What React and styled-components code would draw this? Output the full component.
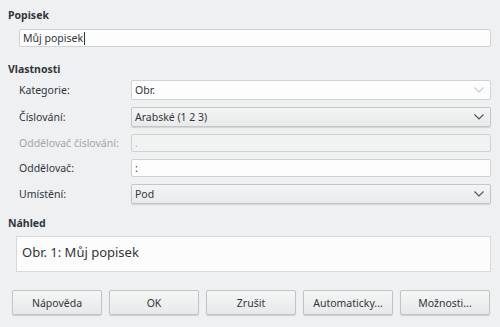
import React from 'react';
import styled, { createGlobalStyle } from 'styled-components';

const Global = createGlobalStyle`
  html, body {
    margin: 0;
    background: #eff0f1;
  }
  body {
    font-family: "Noto Sans", "DejaVu Sans", sans-serif;
    font-size: 10.5px;
    color: #31363b;
  }
`;

const Dialog = styled.div`
  width: 500px;
  height: 327px;
  box-sizing: border-box;
  padding: 7px 8px 0 8px;
  display: flex;
  flex-direction: column;
`;

const Heading = styled.div`
  font-weight: bold;
  height: 16px;
  line-height: 16px;
  margin-top: ${p => p.top || 0}px;
`;

const Section = styled.div`
  padding-left: ${p => p.indent || 11}px;
  padding-right: 1px;
  margin-top: ${p => p.top || 0}px;
`;

const TextInput = styled.div`
  height: 16px;
  border: 1px solid #cfd1d3;
  border-radius: 2px;
  background: ${p => (p.disabled ? '#f1f2f2' : '#fdfdfd')};
  color: ${p => (p.disabled ? '#b0b3b5' : '#31363b')};
  padding: 0 3px;
  line-height: 16px;
  display: flex;
  align-items: center;
`;

const Caret = styled.span`
  display: inline-block;
  width: 1px;
  height: 13px;
  background: #31363b;
  margin-left: 1px;
`;

const Grid = styled.div`
  display: grid;
  grid-template-columns: 112px 1fr;
  row-gap: 7px;
  align-items: center;
`;

const Label = styled.div`
  color: ${p => (p.disabled ? '#a3a6a8' : '#31363b')};
`;

const Combo = styled.div`
  height: 18px;
  border: 1px solid ${p => (p.editable ? '#cfd1d3' : '#c4c6c8')};
  border-radius: 2px;
  background: ${p =>
    p.editable ? '#fdfdfd' : 'linear-gradient(#f3f4f4, #e9eaeb)'};
  box-shadow: ${p => (p.editable ? 'none' : '0 1px 1px rgba(0,0,0,0.12)')};
  display: flex;
  align-items: center;
  justify-content: space-between;
  padding: 0 3px;
  line-height: 18px;
`;

const Chevron = ({ color }) => (
  <svg width="12" height="8" viewBox="0 0 12 8" style={{ marginRight: 2 }}>
    <path d="M1.5 1.5 L6 6 L10.5 1.5" fill="none" stroke={color} strokeWidth="1.1" />
  </svg>
);

const Preview = styled.div`
  height: 34px;
  border: 1px solid #d6d8da;
  background: #fcfcfc;
  padding: 0 5px;
  font-size: 13px;
  line-height: 30px;
`;

const Buttons = styled.div`
  display: flex;
  gap: 7px;
  padding-left: 4px;
  margin-top: 18px;
`;

const Button = styled.div`
  width: 88px;
  height: 23px;
  border: 1px solid #c2c4c6;
  border-radius: 2px;
  background: linear-gradient(#f4f5f5, #e8e9ea);
  box-shadow: 0 1px 1px rgba(0,0,0,0.15);
  display: flex;
  align-items: center;
  justify-content: center;
`;

export default function App() {
  return (
    <>
      <Global />
      <Dialog>
        <Heading>Popisek</Heading>
        <Section top={6} indent={11}>
          <TextInput>
            Můj popisek<Caret />
          </TextInput>
        </Section>
        <Heading top={14}>Vlastnosti</Heading>
        <Section top={3} indent={11}>
          <Grid>
            <Label>Kategorie:</Label>
            <Combo editable>
              <span>Obr.</span>
              <Chevron color="#b3cfe0" />
            </Combo>
            <Label>Číslování:</Label>
            <Combo>
              <span>Arabské (1 2 3)</span>
              <Chevron color="#4d5257" />
            </Combo>
            <Label disabled>Oddělovač číslování:</Label>
            <TextInput disabled>.</TextInput>
            <Label>Oddělovač:</Label>
            <TextInput>:</TextInput>
            <Label>Umístění:</Label>
            <Combo>
              <span>Pod</span>
              <Chevron color="#4d5257" />
            </Combo>
          </Grid>
        </Section>
        <Heading top={11}>Náhled</Heading>
        <Section top={5} indent={8}>
          <Preview>Obr. 1: Můj popisek</Preview>
        </Section>
        <Buttons>
          <Button>Nápověda</Button>
          <Button>OK</Button>
          <Button>Zrušit</Button>
          <Button>Automaticky...</Button>
          <Button>Možnosti...</Button>
        </Buttons>
      </Dialog>
    </>
  );
}
